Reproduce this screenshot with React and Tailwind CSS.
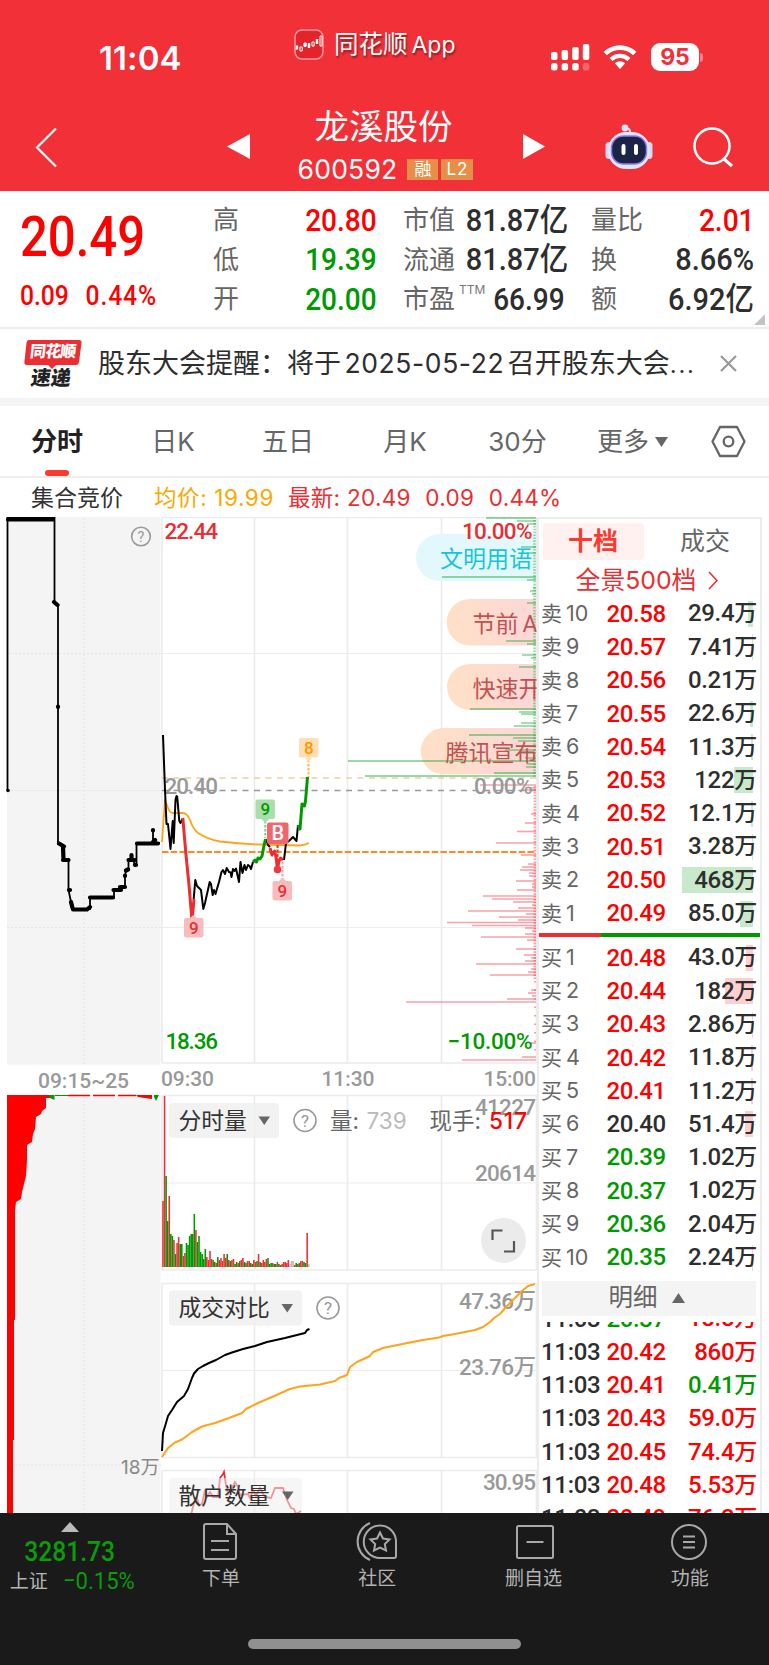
import clsx from "clsx";

const STATS = [
  { label: "高", value: "20.80", color: "text-[#ff0000]" },
  { label: "低", value: "19.39", color: "text-[#009900]" },
  { label: "开", value: "20.00", color: "text-[#009900]" },
];

const CAPS = [
  { label: "市值", value: "81.87", unit: "亿", wide: true },
  { label: "流通", value: "81.87", unit: "亿", wide: true },
  { label: "市盈", value: "66.99", sup: "TTM" },
];

const TURNOVER = [
  { label: "量比", value: "2.01", color: "text-[#ff0000]" },
  { label: "换", value: "8.66%", wide: true },
  { label: "额", value: "6.92", unit: "亿", wide: true },
];

const ASKS = [
  ["10", "20.58", "29.4", 5],
  ["9", "20.57", "7.41", 1],
  ["8", "20.56", "0.21", 0],
  ["7", "20.55", "22.6", 3],
  ["6", "20.54", "11.3", 2],
  ["5", "20.53", "122", 19],
  ["4", "20.52", "12.1", 2],
  ["3", "20.51", "3.28", 1],
  ["2", "20.50", "468", 71],
  ["1", "20.49", "85.0", 13],
];

const BIDS = [
  ["1", "20.48", "43.0", 7],
  ["2", "20.44", "182", 28],
  ["3", "20.43", "2.86", 1],
  ["4", "20.42", "11.8", 2],
  ["5", "20.41", "11.2", 2],
  ["6", "20.40", "51.4", 8],
  ["7", "20.39", "1.02", 0],
  ["8", "20.37", "1.02", 0],
  ["9", "20.36", "2.04", 0],
  ["10", "20.35", "2.24", 1],
];

const TRADES = [
  ["20.37", "18.8", "up"],
  ["20.42", "860", "up"],
  ["20.41", "0.41", "down"],
  ["20.43", "59.0", "up"],
  ["20.45", "74.4", "up"],
  ["20.48", "5.53", "up"],
  ["20.49", "76.2", "up"],
];

// [y, left edge] of the longer levels, the right edge is fixed at 536
const SELL_DEPTH = [
  [518, 486], [521, 517], [524, 527], [547, 521], [553, 527], [577, 442], [580, 527], [588, 533], [591, 530],
  [594, 532], [603, 527], [641, 506], [644, 527], [655, 522], [658, 531], [667, 519], [709, 470], [712, 519],
  [714, 521], [723, 521], [726, 514], [735, 469], [738, 513], [741, 518], [750, 505], [753, 520], [758, 525],
  [761, 348], [764, 527], [767, 526], [773, 494], [776, 365],
];
const BUY_DEPTH = [
  [785, 480], [788, 529], [790, 521], [814, 531], [823, 525], [831.5, 517], [843, 496], [855, 521], [864, 528],
  [867, 522], [870, 520], [873, 529], [876, 529], [881, 516], [884, 532], [887, 532], [890, 517], [896, 483],
  [899, 492], [902, 513], [905, 532], [908, 518], [911, 468], [914, 526], [917, 499], [920, 518], [922.5, 447],
  [925.5, 472], [928, 525], [931, 532], [934, 525], [937, 481], [940, 527], [949, 516], [955, 524], [958, 531],
  [961, 525], [964, 476], [969, 531], [972, 528], [975, 490], [990, 531], [993, 528], [996, 532], [999, 507],
  [1002, 406], [1043, 531], [1057, 522], [1060, 462],
];

const VOLUME = [
  [66, "r"], [171, "r"], [91, "g"], [46, "g"], [71, "r"], [33, "g"], [31, "g"], [27, "r"], [13, "g"], [24, "r"],
  [30, "r"], [23, "g"], [23, "g"], [11, "r"], [14, "r"], [24, "g"], [22, "g"], [31, "g"], [33, "g"], [33, "g"],
  [53, "g"], [37, "r"], [25, "g"], [31, "g"], [15, "g"], [13, "g"], [8, "g"], [18, "g"], [10, "r"], [7, "r"],
  [16, "r"], [8, "r"], [7, "g"], [5, "g"], [4, "r"], [10, "g"], [7, "r"], [9, "r"], [6, "r"], [13, "r"],
  [9, "r"], [13, "g"], [7, "r"], [6, "g"], [7, "r"], [8, "r"], [3, "g"], [5, "g"], [4, "r"], [6, "g"],
  [7, "r"], [9, "r"], [5, "g"], [4, "g"], [6, "r"], [6, "r"], [4, "g"], [3, "g"], [7, "r"], [5, "r"],
  [6, "g"], [13, "r"], [5, "g"], [4, "r"], [7, "r"], [5, "r"], [8, "r"], [9, "g"], [3, "g"], [4, "g"],
  [4, "r"], [3, "g"], [3, "g"], [5, "r"], [3, "g"], [2, "g"], [3, "r"], [5, "r"], [5, "r"], [4, "r"],
  [7, "r"], [3, "n"], [6, "n"], [6, "n"], [2, "r"], [4, "g"], [3, "r"], [4, "g"], [6, "r"], [6, "r"],
  [5, "g"], [4, "g"], [34, "r"], [3, "n"],
];

const BAR_COLORS = { r: "#ee2f35", g: "#009900", n: "#bbbbbb" };

const TABS = [
  ["日K", "w-[118px]"],
  ["五日", "w-[112px]"],
  ["月K", "w-[122px]"],
  ["30分", "w-[103px]"],
];

const priceColor = (p) =>
  Number(p) > 20.4 ? "text-[#ff0000]" : Number(p) < 20.4 ? "text-[#009900]" : "text-[#2e2e2e]";

/* ---------- header ---------- */

const Robot = () => (
  <svg width="48" height="46" viewBox="0 0 48 46">
    <circle cx="20" cy="4" r="3.4" fill="#dfe4f8" />
    <path d="M20 4 Q26 4 25 10" fill="none" stroke="#dfe4f8" strokeWidth="2" />
    <rect x="0.5" y="18" width="7" height="17" rx="3.5" fill="#d4d8f2" />
    <rect x="40.5" y="18" width="7" height="17" rx="3.5" fill="#d4d8f2" />
    <rect x="3" y="8" width="42" height="37" rx="18" fill="#e3e6fa" />
    <rect x="6.5" y="12" width="35" height="28" rx="12" fill="#1b2347" stroke="#8c7bf0" strokeWidth="1.5" />
    <rect x="16.5" y="20" width="4" height="11" rx="2" fill="#fff" />
    <rect x="29" y="20" width="4" height="11" rx="2" fill="#fff" />
  </svg>
);

const StatusBar = () => (
  <div className="flex h-[96px] items-start pl-[99px] text-white">
    <div className="mt-[39px] w-[195px] font-[Inter,sans-serif] text-[33px] leading-[38px] font-semibold tracking-[0.1px]">
      11:04
    </div>
    <svg className="mt-[29px]" width="30" height="31" viewBox="0 0 30 31">
      <rect x="1" y="1" width="28" height="29" rx="7" fill="#e3242b" stroke="#f79a9e" strokeWidth="1.5" />
      <path d="M3 20.5v-4M11 18v-4M15 19v-5M23 15v-5" stroke="#fff" strokeWidth="2.4" />
      <path d="M6 18h2.2v4H6zM10 14h2.2v3H10zM18 13h2.2v4H18zM26 7h2v10h-2z" fill="none" stroke="#fff" strokeWidth="1" />
    </svg>
    <div className="mt-[29px] ml-[10px] w-[217px] text-[24.5px] leading-[32px] whitespace-nowrap [text-shadow:1px_2px_2px_rgba(0,0,0,0.45)]">
      同花顺<span className="ml-1 font-[Inter,sans-serif] text-[23px]">App</span>
    </div>
    <svg className="mt-[43px]" width="39" height="28" viewBox="0 0 39 28" fill="#fff">
      <rect x="0" y="9" width="6.5" height="8" rx="2" />
      <rect x="10.6" y="7" width="6.5" height="10" rx="2" />
      <rect x="21.2" y="4" width="6.5" height="13" rx="2" />
      <rect x="31.8" y="1" width="6.5" height="16" rx="2" />
      <rect x="0" y="20" width="6.5" height="7.5" rx="2.5" />
      <rect x="10.6" y="20" width="6.5" height="7.5" rx="2.5" />
      <rect x="21.2" y="20" width="6.5" height="7.5" rx="2.5" />
      <rect x="31.8" y="20" width="6.5" height="7.5" rx="2.5" opacity="0.25" />
    </svg>
    <svg className="mt-[44px] ml-[13px]" width="34" height="26" viewBox="0 0 34 26" fill="none" stroke="#fff">
      <path d="M2.2 9.5 A21.5 21.5 0 0 1 31.8 9.5" strokeWidth="4.6" />
      <path d="M8 15.5 A13 13 0 0 1 26 15.5" strokeWidth="4.4" />
      <path d="M17 25 L11.8 19.3 A7.5 7.5 0 0 1 22.2 19.3 Z" fill="#fff" stroke="none" />
    </svg>
    <div className="mt-[43px] ml-[14px] flex h-[28px] w-[48px] items-center justify-center rounded-[9px] bg-white font-[Inter,sans-serif] text-[23px] font-bold text-[#f13038]">
      95
    </div>
    <div className="mt-[53px] ml-[1px] h-[9px] w-[3px] rounded-r-full bg-white/40" />
  </div>
);

const TitleBar = () => (
  <div className="flex h-[95px] text-white">
    <svg className="mt-[31px] ml-[35px]" width="22" height="41" viewBox="0 0 22 41" fill="none" stroke="#fff" strokeWidth="2.2">
      <path d="M21 1.5 L2 20.5 L21 39.5" />
    </svg>
    <svg className="mt-[38px] ml-[170px]" width="23" height="25" fill="#fff">
      <path d="M23 0 L0 12.5 L23 25 Z" />
    </svg>
    <div className="flex w-[273px] flex-col items-center">
      <div className="mt-[9px] pr-[6px] text-[34.5px] leading-[44px]">龙溪股份</div>
      <div className="flex items-center gap-[3px] pr-[2px]">
        <span className="mr-[7px] font-[Inter,sans-serif] text-[26.5px] leading-[41px] tracking-[0.2px]">600592</span>
        <span className="flex h-[21px] w-[31px] items-center justify-center bg-[#e58f48] text-[17px]">融</span>
        <span className="flex h-[21px] w-[32px] items-center justify-center bg-[#e58f48] font-[Inter,sans-serif] text-[17px] tracking-[1px]">L2</span>
      </div>
    </div>
    <svg className="mt-[38px]" width="22" height="25" fill="#fff">
      <path d="M0 0 L22 12.5 L0 25 Z" />
    </svg>
    <div className="mt-[28px] ml-[60px]">
      <Robot />
    </div>
    <svg className="mt-[31px] ml-[40px]" width="40" height="41" viewBox="0 0 40 41" fill="none" stroke="#fff" strokeWidth="2.5">
      <circle cx="19" cy="19" r="17.5" />
      <path d="M31 32 L39 39" strokeWidth="3" />
    </svg>
  </div>
);

/* ---------- quote ---------- */

const StatColumn = ({ rows, className }) => (
  <div className={clsx("flex flex-col", className)}>
    {rows.map((r) => (
      <div key={r.label} className="flex h-[39.5px] items-center">
        <span className="shrink-0 text-[26px] whitespace-nowrap text-[#666]">{r.label}</span>
        {r.sup && (
          <span className="-mt-5 -mr-[10px] ml-[4px] font-[Inter,sans-serif] text-[12px] text-[#777]">{r.sup}</span>
        )}
        <span
          className={clsx(
            "-mt-px ml-auto origin-right text-[32px] leading-[39px] font-medium whitespace-nowrap",
            r.wide ? "scale-x-[0.905]" : "scale-x-[0.875]",
            r.color || "text-[#2e2e2e]"
          )}
        >
          {r.value}
          {r.unit && <span className="text-[31.5px]">{r.unit}</span>}
        </span>
      </div>
    ))}
  </div>
);

const Quote = () => (
  <section className="relative flex h-[138px] border-b-2 border-[#eee] bg-white pt-[10px]">
    <div className="w-[213px] pl-[20px] text-[#ff0000]">
      <div className="mt-[8px] origin-left scale-x-[0.875] text-[56px] leading-[56px] font-medium">20.49</div>
      <div className="mt-[14px] flex origin-left scale-x-[0.88] gap-[19px] text-[28px] leading-[33px] font-medium">
        <span>0.09</span>
        <span className="tracking-[1px]">0.44%</span>
      </div>
    </div>
    <StatColumn rows={STATS} className="w-[164px]" />
    <StatColumn rows={CAPS} className="ml-[26px] w-[162px]" />
    <StatColumn rows={TURNOVER} className="ml-[26px] w-[163px]" />
    <svg className="absolute right-[4px] bottom-[2px]" width="11" height="11" fill="#c4c4c4">
      <path d="M11 0 V11 H0 Z" />
    </svg>
  </section>
);

const News = () => (
  <section className="flex h-[69px] items-center bg-white pl-[24px]">
    <div className="relative h-[47px] w-[58px]">
      <svg className="absolute inset-0" width="58" height="47">
        <path d="M5 0 H55 Q58 0 57.5 3 L55 22 Q54.6 25 52 25 H32 L28 29 L24 25 H3 Q0 25 0.4 22 L2.5 3 Q3 0 5 0 Z" fill="#ea2e31" />
      </svg>
      <div className="absolute top-[3px] left-[6px] skew-x-[-6deg] text-[16px] leading-[18px] font-black tracking-[-0.8px] text-white">同花顺</div>
      <div className="absolute top-[29px] left-[7px] skew-x-[-8deg] text-[20px] leading-[18px] font-black text-[#222]">速递</div>
    </div>
    <p className="mt-px ml-[16px] w-[601px] text-[27px] whitespace-nowrap text-[#2e2e2e]">
      股东大会提醒：将于
      <span className="mx-[3.5px] font-[Inter,sans-serif] text-[26.5px] tracking-[0.6px]">2025-05-22</span>
      召开股东大会<span className="tracking-[1.5px]">...</span>
    </p>
    <svg className="ml-[21px]" width="17" height="17" stroke="#999" strokeWidth="2.2">
      <path d="M1 1 L16 16 M16 1 L1 16" />
    </svg>
  </section>
);

const Tabs = () => (
  <nav className="flex h-[72px] border-b-2 border-[#eee] bg-white text-[26px] text-[#666]">
    <div className="flex w-[114px] flex-col items-center pt-[17px] font-bold text-[#222]">
      <span className="leading-[38px]">分时</span>
      <span className="mt-[9px] h-[6px] w-[24px] rounded-[3px] bg-[#fb3a2f]" />
    </div>
    {TABS.map(([label, width]) => (
      <span key={label} className={clsx("pt-[17px] text-center font-[Inter,'Noto_Sans_CJK_SC',sans-serif] leading-[38px]", width)}>
        {label}
      </span>
    ))}
    <span className="ml-[28px] flex h-[72px] items-center leading-[38px]">
      更多
      <svg className="ml-[6px]" width="13" height="11" fill="#666">
        <path d="M0 0 H13 L6.5 10 Z" />
      </svg>
    </span>
    <svg className="mt-[19px] ml-[43px]" width="35" height="33" viewBox="0 0 35 33" fill="none" stroke="#666" strokeWidth="2.3">
      <path d="M9 2 H26 L33.5 16.5 L26 31 H9 L1.5 16.5 Z" strokeLinejoin="round" />
      <circle cx="17.5" cy="16.5" r="4.8" />
    </svg>
  </nav>
);

const InfoLine = () => (
  <div className="flex h-[39px] items-center bg-white pt-px pl-[31px] font-[Inter,'Noto_Sans_CJK_SC',sans-serif] text-[22.5px] whitespace-nowrap">
    <span className="w-[123px] text-[23px] text-[#333]">集合竞价</span>
    <span className="w-[134px] tracking-[0.6px] text-[#fba800]">均价: 19.99</span>
    <span className="flex gap-[14.5px] tracking-[0.3px] text-[#ea2e31]">
      <span>最新: 20.49</span>
      <span>0.09</span>
      <span>0.44%</span>
    </span>
  </div>
);

/* ---------- charts ---------- */

const Help = ({ x, y, r = 11 }) => (
  <g>
    <circle cx={x} cy={y} r={r} fill="none" stroke="#999" strokeWidth="1.6" />
    <text x={x} y={y + r * 0.55} textAnchor="middle" fontSize={r * 1.55} fill="#999">?</text>
  </g>
);

const Tag = ({ x, y, size = 19.5, bg, fg, children, fontSize = 17 }) => (
  <g>
    <rect x={x} y={y} width={size} height={size} rx="2" fill={bg} />
    <text x={x + size / 2} y={y + size / 2 + fontSize * 0.36} textAnchor="middle" fontSize={fontSize} fontWeight="500" fill={fg}>
      {children}
    </text>
  </g>
);

const Grid = ({ top, middle, bottom }) => (
  <g stroke="#ececec" strokeWidth="1.6">
    <path d={`M162 ${top}H537 M162 ${bottom}H537`} />
    {middle.map((y) => (
      <path key={y} d={`M162 ${y}H537`} strokeWidth="1.2" />
    ))}
    <path d={`M162 ${top}V${bottom} M254.5 ${top}V${bottom} M347.5 ${top}V${bottom} M441.5 ${top}V${bottom} M536.5 ${top}V${bottom}`} />
  </g>
);

const AuctionChart = () => (
  <g>
    <rect x="7" y="517" width="153.5" height="547.5" fill="#f4f4f4" />
    <path d="M84 518V1064 M7 653.5H161 M7 927.5H161" stroke="#e5e5e5" strokeDasharray="2 2" />
    <path d="M7 790.5H161" stroke="#ebebeb" />
    <g fill="none" stroke="#000" strokeWidth="1.8">
      <path d="M7.5 790V518H54.5V602L58 605V843L63 846V860H68.5V890L71 902L72 909H90V897.5H114V890H121V887H125V876L126 870H128.5V860H131V855L135 865H136.5V843H153V831V843H160" />
    </g>
    <g fill="none" stroke="#000" strokeWidth="4.2" strokeLinecap="round">
      <path d="M8 519.5H53 M54 602L57.5 605 M59 843.5L64 846.5 M63 847L63.5 859.5 M63 860H68.5 M69 890H70 M71 902L72.5 908 M73 909.5H87L90 907 M90 897.5H113 M113.5 890H121 M120 887H125 M125 876V875.5 M126 870.5L128 869.5 M128.5 860H135 M131.5 855V860 M135 865H136 M137 843.5H158 M153 842L155 840 M153 830.5V830 M58 707V706.5" />
    </g>
    <circle cx="8" cy="790.5" r="1.8" />
    <Help x={141} y={536.5} r={9.3} />
  </g>
);

const PriceChart = () => (
  <g>
    <Grid top={517.5} middle={[653.5, 927.5]} bottom={1063} />
    <defs>
      <linearGradient id="topic" x1="0" x2="1">
        <stop offset="0" stopColor="#ffe0c6" />
        <stop offset="1" stopColor="#fcd7d8" />
      </linearGradient>
    </defs>
    <path d="M536 534H439.5a23.5 23.5 0 0 0 0 47H536Z" fill="#e3f8fc" />
    <path d="M536 599H470a23 23 0 0 0 0 46.5H536Z" fill="url(#topic)" />
    <path d="M536 664H470a23 23 0 0 0 0 46H536Z" fill="url(#topic)" />
    <path d="M536 728H444a23 23 0 0 0 0 46.5H536Z" fill="url(#topic)" />
    <g stroke="#00a020" strokeOpacity="0.4" strokeWidth="1.8">
      {SELL_DEPTH.map(([y, x]) => (
        <path key={y} d={`M${x} ${y}H536`} />
      ))}
      <path d="M534.5 520V778" strokeWidth="2.5" strokeDasharray="1.6 1.3" />
    </g>
    <g stroke="#f0303c" strokeOpacity="0.45" strokeWidth="1.6">
      {BUY_DEPTH.map(([y, x]) => (
        <path key={y} d={`M${x} ${y}H536`} />
      ))}
      <path d="M534.8 786V980" strokeWidth="2.5" strokeDasharray="1.6 1.3" />
      <path d="M535 981V1056" strokeWidth="2" strokeDasharray="1.5 7" />
    </g>
    <svg x="162" y="517" width="374.5" height="547" viewBox="162 517 374.5 547">
      <g fontSize="23" fill="#c25252">
        <text x="440" y="566.5" fill="#16c4dc">文明用语</text>
        <text x="472.5" y="631.5">节前<tspan dx="4">A</tspan></text>
        <text x="472.5" y="696.5">快速开</text>
        <text x="445.5" y="761">腾讯宣布</text>
      </g>
    </svg>

    <path d="M162 778H536" stroke="#ebcfa8" strokeWidth="1.6" strokeDasharray="6 5.5" />
    <path d="M162 790.5H536" stroke="#999" strokeWidth="1.6" strokeDasharray="6 5.5" />
    <path d="M162 852H536" stroke="#ff8a1f" strokeWidth="2" strokeDasharray="6.5 2.2" />

    <g fontSize="22.5" fontWeight="500">
      <g fill="#ea2e31">
        <text x="164.5" y="539" textLength="53.5">22.44</text>
        <text x="462" y="539" textLength="70.5">10.00%</text>
      </g>
      <g fill="#999">
        <text x="164.5" y="794" textLength="53.5">20.40</text>
        <text x="474" y="794" textLength="58.5">0.00%</text>
      </g>
      <g fill="#009900">
        <text x="165.5" y="1049" textLength="52.5">18.36</text>
        <text x="447.5" y="1049" textLength="85">−10.00%</text>
      </g>
    </g>

    <g fill="none" strokeWidth="2" strokeLinejoin="round">
      <path stroke="#ffa31a" strokeWidth="1.8" d="M162 842L165 800L168 808Q170 813 173 813H183Q187 813 190 820Q193 829 198 833Q207 839 220 841.5Q240 844 260 844.5L300 845.5Q305 845 309 843" />
      <path stroke="#000" d="M163 735L165 790L166.5 824H168L170.5 849L172.7 821L173.7 843L175.5 800L176.5 796L177.2 796.5L179.3 821L180.5 823L182.5 819" />
      <path stroke="#000" d="M193.7 899L195.3 880L197 886L201 890L203.3 909L205 903L209.7 882L211 884L212.7 895L214 890L215.5 894L219 882L221.5 872L223 870L225 874L226.7 868L229 872L230.7 872.5L231.5 877L233 869L234.5 871L236 868.5L239 882L240.5 862L242.5 873L244.5 865L246 870L248 865L249.5 866L251 869L253 862" />
      <path stroke="#000" d="M266 839L268 845L270 847M284 860L286 843L289 841L293 837L296.5 841L298 825" />
      <path stroke="#009900" strokeWidth="3" d="M253 862L255 860L256.5 862L258 858L260 859L262 856L263.5 848L265.5 839M298 825L300 829L302 804L304.5 806L305.5 801L307.5 777" />
      <path stroke="#ea2e31" strokeWidth="3" d="M182.8 818L186 855L189 885L192 921L194 899M270 848L272 855L274.5 851L276 857L277.5 869L279 861L280.5 858L283 860" />
      <path stroke="#7ccb84" strokeDasharray="2.5 1.5" d="M265.3 821V838" />
      <path stroke="#ea2e31" strokeDasharray="3 1.5" d="M277.5 845V868" />
      <path stroke="#f4a0a3" strokeDasharray="2.5 1.5" d="M282.5 862V880" />
      <path stroke="#ffb54d" strokeDasharray="2.5 1.5" d="M308.5 760V777" />
    </g>
    <circle cx="277.5" cy="869.5" r="3.8" fill="#ee3a42" />
    <path d="M279 881L282.5 877.5L286 881Z M190 918L193.5 915L197 918Z" fill="#f9bcbe" />
    <path d="M261.5 819L265.3 823L269 819Z" fill="#aadfad" />
    <path d="M304.5 757.5L308.5 762L312.5 757.5Z" fill="#ffdfb3" />
    <Tag x={184} y={918} bg="#f9bcbe" fg="#ea2e31">9</Tag>
    <Tag x={255.5} y={799.5} bg="#aadfad" fg="#009900">9</Tag>
    <Tag x={272.5} y={881} bg="#f9bcbe" fg="#ea2e31">9</Tag>
    <Tag x={299} y={738} bg="#ffdfb3" fg="#ff9500">8</Tag>
    <Tag x={267} y={822.5} size={21.5} fontSize={20} bg="#f1666e" fg="#fff">B</Tag>

    <g fontSize="21" fontWeight="500" fill="#999">
      <text x="38" y="1088" textLength="91">09:15~25</text>
      <text x="161" y="1086" textLength="53">09:30</text>
      <text x="321.5" y="1086" textLength="53">11:30</text>
      <text x="483.5" y="1086" textLength="52.5">15:00</text>
    </g>
  </g>
);

const AuctionVolume = () => (
  <g>
    <rect x="7" y="1095" width="153.5" height="420" fill="#f4f4f4" />
    <path d="M84 1096V1513 M7 1465H161" stroke="#e5e5e5" strokeDasharray="2 2" />
    <path
      d="M7 1095H50V1098H46V1108L42 1111L41 1114L36 1117L35 1129L33 1134L32 1142L27 1145V1160L26 1176L24 1184L22 1192L21 1199L16 1202L15 1210V1320H14V1440H13V1513H7Z"
      fill="#ff0000"
    />
    <path d="M49 1095H54.5V1100L50 1098Z M154 1095H159L156 1101L154 1097Z" fill="#009900" />
    <path d="M68 1095.5H136" stroke="#ff0000" strokeWidth="1.5" strokeDasharray="22 3" />
    <path d="M55 1095.5H68" stroke="#009900" strokeWidth="1" />
    <path d="M136 1095H152V1099L138 1097Z" fill="#ff0000" />
    <text x="159.5" y="1474" textAnchor="end" fontSize="19" fill="#888" className="font-[Inter,'Noto_Sans_CJK_SC',sans-serif]">
      18万
    </text>
  </g>
);

const Selector = ({ x, y, width, children }) => (
  <g>
    <rect x={x} y={y} width={width} height="35" rx="4" fill="#efefef" fillOpacity="0.82" />
    <text x={x + 9.5} y={y + 25.5} fontSize="22.8" fill="#333">{children}</text>
    <path d={`M${x + width - 20.5} ${y + 13.5}h11.5l-5.75 8.5z`} fill="#666" />
  </g>
);

const VolumeChart = () => (
  <g>
    <Grid top={1095.5} middle={[1183]} bottom={1270} />
    {VOLUME.map(([h, c], i) => (
      <rect key={i} x={162.2 + i * 1.567} y={1267 - h} width="1.567" height={h} fill={BAR_COLORS[c]} />
    ))}
    <Selector x={169} y={1103} width={110}>分时量</Selector>
    <Help x={305} y={1120.5} />
    <g fontSize="22.5" fill="#999" fontWeight="500">
      <text x="475" y="1114.5" textLength="61">41227</text>
      <text x="475" y="1181" textLength="61">20614</text>
    </g>
    <g fontSize="22.5" fill="#666" className="font-[Inter,'Noto_Sans_CJK_SC',sans-serif]">
      <text x="330" y="1128.5">量:</text>
      <text x="366.5" y="1128.5" fill="#bbb">739</text>
      <text x="429.5" y="1128.5">现手:</text>
      <text x="489" y="1128.5" fill="#ff0000" fontWeight="500" textLength="38">517</text>
    </g>
    <circle cx="503.5" cy="1240.5" r="22.5" fill="#ebebeb" />
    <path d="M492.5 1240V1230.5H502.5 M514 1241V1251.5H504" fill="none" stroke="#555" strokeWidth="2.2" />
  </g>
);

const TurnoverChart = () => (
  <g>
    <Grid top={1283.5} middle={[1370.5]} bottom={1457.5} />
    <Selector x={169} y={1290.5} width={133}>成交对比</Selector>
    <Help x={328} y={1308} />
    <g fontSize="22.5" fill="#999" fontWeight="500">
      <text x="459" y="1308.5" textLength="77">47.36万</text>
      <text x="459" y="1375" textLength="77">23.76万</text>
    </g>
    <g fill="none" strokeWidth="2" strokeLinejoin="round">
      <path stroke="#000" d="M162 1451L163 1433L166 1423L168 1416L172 1410L177 1402L184 1396L188 1389L192 1378L194 1373.5L198 1369L203 1366L209 1363L216 1360L225 1355L232 1352.5L243 1349L255 1346L267 1342L285 1338L305 1333L307 1330L309.5 1329" />
      <path stroke="#ffa31a" d="M162 1457L168 1448L175 1442.5L182 1439.5L192 1432L202 1426.5L215 1423L229 1418L242 1413L246 1409L258 1403L272 1397L290 1389L300 1386.5L320 1384.5L335 1381L339 1378L347 1375L350 1367L357 1362L370 1356L373 1352L383 1348L400 1344.5L420 1340.5L439 1337.5L443 1336L455 1334L475 1330L483 1327L490 1322L494 1318L500 1314L507 1306L514 1299L522 1291L528 1286L535 1284" />
    </g>
  </g>
);

const RetailChart = () => (
  <g>
    <Grid top={1470.5} middle={[]} bottom={1530} />
    <path
      d="M191 1515L194 1503L197 1498L199 1505L202 1504L205 1490L207 1497L210 1492L213 1497H218L220 1478L223 1474L224 1472L226 1485L228 1494L231 1490L235 1482L238 1487L240 1495L248 1494L250 1498L253 1490L256 1496L260 1488L265 1497L271 1498L275 1488H283L287 1500L291 1508L294 1509L296 1514L301 1511"
      fill="none"
      stroke="#e92f35"
      strokeWidth="1.8"
    />
    <rect x="169" y="1478" width="133" height="40" rx="4" fill="#efefef" fillOpacity="0.55" />
    <text x="178.5" y="1504" fontSize="22.8" fill="#333">散户数量</text>
    <path d="M282 1491.5h11.5l-5.75 8.5z" fill="#666" />
    <text x="483" y="1489.5" fontSize="22.5" fontWeight="500" fill="#999" textLength="53">30.95</text>
  </g>
);

/* ---------- order book ---------- */

const BookRow = ({ side, row, barClass }) => {
  const [level, price, amount, bar] = row;
  return (
    <div className="relative flex h-[33.3px] items-center text-[24px]">
      <span className={clsx("absolute top-[4px] right-[4px] h-[26px]", barClass)} style={{ width: bar }} />
      <span className="relative w-[65.5px] text-[21px] text-[#666]">
        {side}
        <span className="ml-[4px] font-[Inter,sans-serif] text-[21.5px]">{level}</span>
      </span>
      <span className={clsx("relative font-medium tracking-[-0.4px]", priceColor(price))}>{price}</span>
      <span className="relative ml-auto font-medium tracking-[-0.3px] text-[#2e2e2e]">
        {amount}
        <span className="text-[23px]">万</span>
      </span>
    </div>
  );
};

const OrderBook = () => (
  <aside className="flex h-[996px] w-[225px] flex-col border-x-2 border-t-2 border-[#ececec] bg-white">
    <div className="flex h-[43px] pt-[4px] pl-[4px] text-[25px]">
      <span className="flex h-[37px] w-[101px] items-center justify-center rounded bg-[#fff1f0] pr-px font-bold text-[#fb3a2f]">十档</span>
      <span className="flex h-[37px] flex-1 items-center justify-center pl-[6px] text-[#666]">成交</span>
    </div>
    <div className="flex h-[35px] items-center justify-center pt-[2px] pr-[5px] font-[Inter,'Noto_Sans_CJK_SC',sans-serif] text-[24.8px] text-[#ea2e31]">
      全景500档
      <svg className="ml-[12px]" width="10" height="19" fill="none" stroke="#ea2e31" strokeWidth="1.6">
        <path d="M1 1 L9 9.5 L1 18" />
      </svg>
    </div>
    <div className="pr-[3px] pl-[2px]">
      {ASKS.map((row) => (
        <BookRow key={row[0]} side="卖" row={row} barClass="bg-[#c9e9cc]" />
      ))}
    </div>
    <div className="mt-[3px] flex h-[4px] shrink-0">
      <span className="w-[62px] bg-[#ea2e31]" />
      <span className="flex-1 bg-[#009900]" />
    </div>
    <div className="mt-[4px] pr-[3px] pl-[2px]">
      {BIDS.map((row) => (
        <BookRow key={row[0]} side="买" row={row} barClass="bg-[#fccfd1]" />
      ))}
    </div>
    <div className="mt-[7px] mr-[4px] ml-[3px] flex h-[35px] shrink-0 items-center justify-center bg-[#f4f4f4] pr-[5px] text-[24.5px] text-[#666]">
      明细
      <svg className="ml-[14px]" width="13" height="10" fill="#666">
        <path d="M6.5 0 L13 10 H0 Z" />
      </svg>
    </div>
    <div className="mt-[6px] flex min-h-0 flex-1 flex-col overflow-hidden pr-[3px] pl-[2px]">
      <div className="-mt-[20px]">
        {TRADES.map(([price, amount, dir]) => (
          <div key={price} className="flex h-[33.3px] items-center text-[24px] font-medium">
            <span className="w-[65.5px] tracking-[-0.3px] text-[#2e2e2e]">11:03</span>
            <span className={clsx("tracking-[-0.4px]", priceColor(price))}>{price}</span>
            <span className={clsx("ml-auto tracking-[-0.3px]", dir === "up" ? "text-[#ff0000]" : "text-[#009900]")}>
              {amount}
              <span className="text-[23px]">万</span>
            </span>
          </div>
        ))}
      </div>
    </div>
  </aside>
);

/* ---------- bottom bar ---------- */

const NavItem = ({ label, children }) => (
  <div className="flex flex-1 flex-col items-center text-[19px] text-[#b4b4b4]">
    <svg className="mt-[8px]" width="42" height="40" viewBox="0 0 42 40" fill="none" stroke="#a8a8a8" strokeWidth="2">
      {children}
    </svg>
    <span className="mt-[4px] leading-[28px]">{label}</span>
  </div>
);

const BottomBar = () => (
  <footer className="flex h-[152px] flex-col items-center bg-[#1a1a1a]">
    <div className="flex h-[126px] w-full pr-px">
      <div className="flex w-[143px] flex-col items-center pr-[4px]">
        <svg className="mt-[9px] shrink-0" width="18" height="10" fill="#bbb">
          <path d="M9 0 L18 10 H0 Z" />
        </svg>
        <span className="mt-[4px] scale-x-[0.88] text-[28px] leading-[32px] font-medium text-[#0a9c0a]">3281.73</span>
        <div className="flex items-center pl-[6px] whitespace-nowrap">
          <span className="text-[19px] leading-[28px] text-[#b4b4b4]">上证</span>
          <span className="-mt-[2px] -mr-[7px] ml-[15px] origin-left scale-x-[0.9] text-[24.5px] leading-[26px] text-[#0a9c0a]">−0.15%</span>
        </div>
      </div>
      <NavItem label="下单">
        <path d="M4 5 Q4 3 6 3 H27 L36 13 V36 Q36 38 34 38 H6 Q4 38 4 36 Z M27 3 V13 H36" />
        <path d="M11 20 H29 M11 29 H29" />
      </NavItem>
      <NavItem label="社区">
        <path d="M14 2 A20 20 0 0 0 14 39" />
        <path d="M24 4.5 A16 16 0 0 0 24 37 H38 Q40 37 40 35 V20.5 A16 16 0 0 0 24 4.5 Z" />
        <path d="M24 11.5 L27 17.5 L33.5 18.5 L28.8 23 L30 29.5 L24 26.5 L18 29.5 L19.2 23 L14.5 18.5 L21 17.5 Z" />
      </NavItem>
      <NavItem label="删自选">
        <rect x="4" y="5" width="36" height="32" rx="1.5" />
        <path d="M13.5 21 H30.5" />
      </NavItem>
      <NavItem label="功能">
        <circle cx="20" cy="21" r="17" />
        <path d="M14 15.5 H26 M14 21 H26 M14 26.5 H26" />
      </NavItem>
    </div>
    <div className="h-[10px] w-[273px] rounded-full bg-[#909090]" />
  </footer>
);

export default function App() {
  return (
    <div className="h-[1665px] w-[769px] overflow-hidden bg-white font-[Roboto,'Noto_Sans_CJK_SC',sans-serif]">
      <header className="h-[191px] bg-[#f13038]">
        <StatusBar />
        <TitleBar />
      </header>
      <Quote />
      <News />
      <div className="h-[8px] bg-[#f4f4f4]" />
      <Tabs />
      <InfoLine />
      <main className="flex h-[996px] overflow-hidden">
        <svg className="shrink-0" width="537" height="996" viewBox="0 517 537 996">
          <AuctionChart />
          <PriceChart />
          <AuctionVolume />
          <VolumeChart />
          <TurnoverChart />
          <RetailChart />
        </svg>
        <OrderBook />
      </main>
      <BottomBar />
    </div>
  );
}
